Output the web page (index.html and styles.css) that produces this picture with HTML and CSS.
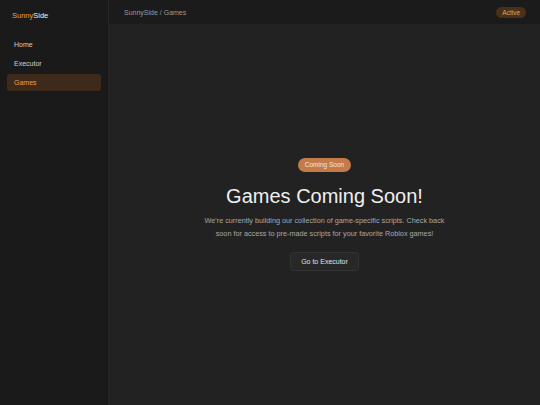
FILE: index.html
```html
<!DOCTYPE html>
<html>
<head>
<meta charset="utf-8">
<link rel="stylesheet" href="styles.css">
</head>
<body>
<div class="app">
  <aside class="sidebar">
    <div class="logo"><span class="sunny">Sunny</span>Side</div>
    <nav class="nav">
      <a class="nav-item">Home</a>
      <a class="nav-item">Executor</a>
      <a class="nav-item active">Games</a>
    </nav>
  </aside>
  <div class="main">
    <header class="topbar">
      <div class="crumb">SunnySide / Games</div>
      <div class="status">Active</div>
    </header>
    <section class="content">
      <div class="hero">
        <div class="pill">Coming Soon</div>
        <h1 class="title">Games Coming Soon!</h1>
        <p class="desc">We're currently building our collection of game-specific scripts. Check back soon for access to pre-made scripts for your favorite Roblox games!</p>
        <button class="btn">Go to Executor</button>
      </div>
    </section>
  </div>
</div>
</body>
</html>
```
FILE: styles.css
```css
* { box-sizing: border-box; }
html, body { margin: 0; padding: 0; height: 100%; }
body {
  font-family: "Liberation Sans", Arial, sans-serif;
  background: #222222;
  color: #e6e6e6;
}
.app { display: flex; height: 405px; }
.sidebar {
  width: 109px;
  flex: 0 0 109px;
  background: #1a1a1a;
  border-right: 1px solid #262626;
  display: flex;
  flex-direction: column;
}
.logo {
  height: 32px;
  padding: 11px 12px 0;
  font-size: 7.5px;
  font-weight: 500;
  color: #f0f0f0;
}
.sunny { color: #e8a33e; }
.nav { display: flex; flex-direction: column; gap: 2px; padding: 4px 7px 0; }
.nav-item {
  height: 17px;
  line-height: 17px;
  padding-left: 7px;
  font-size: 7px;
  color: #cfcfcf;
  border-radius: 3px;
}
.nav-item.active {
  background: #3e2a1a;
  color: #e8a050;
}
.main { flex: 1; display: flex; flex-direction: column; }
.topbar {
  height: 24px;
  background: #1b1b1b;
  display: flex;
  align-items: center;
  justify-content: space-between;
  padding: 0 14px 0 15px;
}
.crumb { font-size: 7px; color: #9a9a9a; }
.status {
  font-size: 6.5px;
  color: #e6a055;
  background: #4a3019;
  border-radius: 7px;
  padding: 2px 6px;
  line-height: 7px;
}
.content {
  flex: 1;
  display: flex;
  align-items: center;
  justify-content: center;
}
.hero {
  display: flex;
  flex-direction: column;
  align-items: center;
  text-align: center;
}
.pill {
  background: #c47a4b;
  color: #f6e6da;
  font-size: 6.5px;
  height: 14px;
  line-height: 14px;
  padding: 0 7px;
  border-radius: 7px;
}
.title {
  margin: 12px 0 0;
  font-size: 20px;
  font-weight: 400;
  line-height: 24px;
  color: #f0f0f0;
}
.desc {
  margin: 6px 0 0;
  width: 252px;
  font-size: 7.25px;
  line-height: 13px;
  color: #a8a8a8;
}
.btn {
  margin-top: 12px;
  height: 19px;
  padding: 0 10px;
  font-family: inherit;
  font-size: 7px;
  color: #e0e0e0;
  background: #282828;
  border: 1px solid #323232;
  border-radius: 3px;
}
```
